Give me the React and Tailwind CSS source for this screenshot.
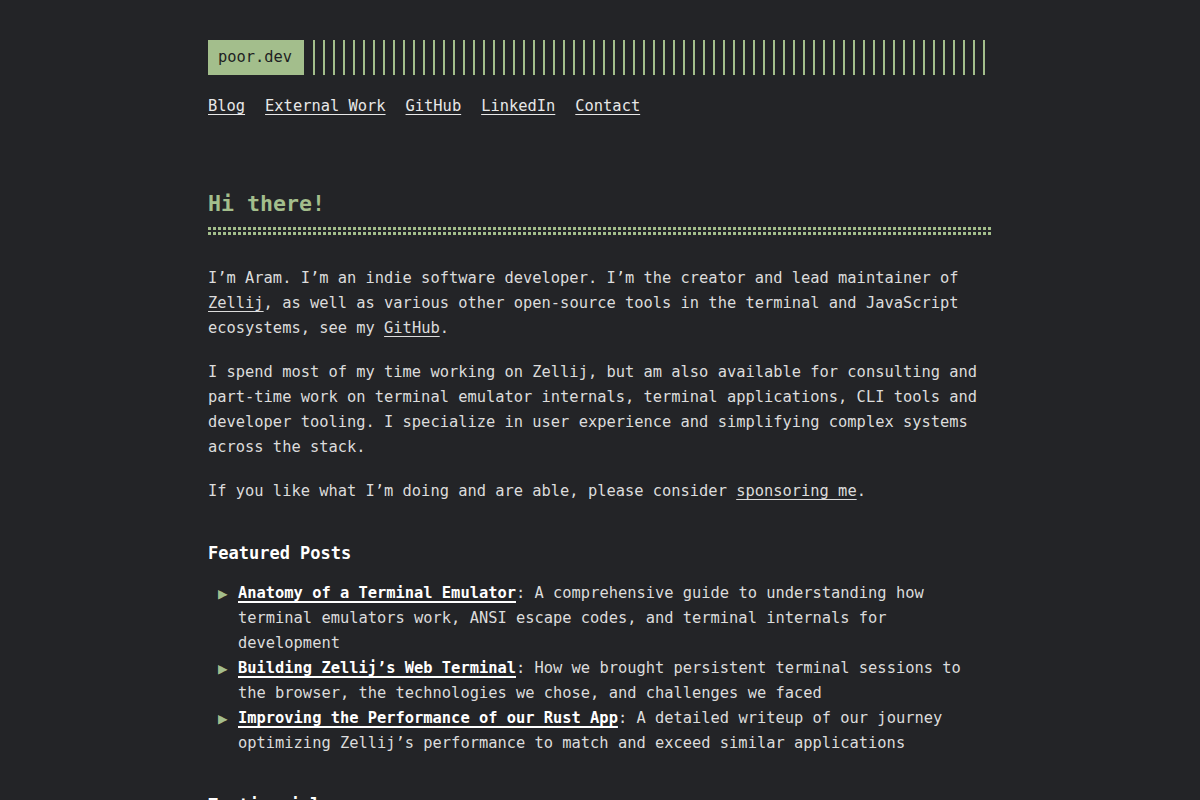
export default function App() {
  const links = ["Blog", "External Work", "GitHub", "LinkedIn", "Contact"];
  const posts = [
    {
      title: "Anatomy of a Terminal Emulator",
      text: "A comprehensive guide to understanding how terminal emulators work, ANSI escape codes, and terminal internals for development",
    },
    {
      title: "Building Zellij’s Web Terminal",
      text: "How we brought persistent terminal sessions to the browser, the technologies we chose, and challenges we faced",
    },
    {
      title: "Improving the Performance of our Rust App",
      text: "A detailed writeup of our journey optimizing Zellij’s performance to match and exceed similar applications",
    },
  ];

  return (
    <div className="min-h-screen bg-[#232427] text-[#dcdcdc] font-['DejaVu_Sans_Mono','Liberation_Mono',monospace] text-[15.4px] leading-[25px]">
      <div className="mx-auto w-[784px] pt-[40px] pb-10">
        <header className="flex items-stretch h-[35px]">
          <div className="bg-[#a3be8c] text-[#1e1f22] px-[10px] flex items-center w-[96px]">poor.dev</div>
          <div className="ml-[9px] w-[675px] bg-[repeating-linear-gradient(90deg,#a3be8c_0_2px,transparent_2px_10px)]" />
        </header>

        <nav className="flex gap-[20px] mt-[19px]">
          {links.map((l) => (
            <a key={l} href="#" className="underline underline-offset-[3px] text-[#e8e8e8]">
              {l}
            </a>
          ))}
        </nav>

        <h1 className="mt-[71px] text-[21.6px] leading-[28px] font-bold text-[#a3be8c]">Hi there!</h1>
        <div className="mt-[9px] flex flex-col gap-[2px]">
          <div className="h-[3px] bg-[repeating-linear-gradient(90deg,#a3be8c_0_3px,transparent_3px_5px)]" />
          <div className="h-[3px] bg-[repeating-linear-gradient(90deg,#a3be8c_0_3px,transparent_3px_5px)]" />
        </div>

        <div className="mt-[31px] flex flex-col gap-[19px]">
          <p>
            I’m Aram. I’m an indie software developer. I’m the creator and lead maintainer of{" "}
            <a href="#" className="underline underline-offset-[3px]">Zellij</a>, as well as various other open-source tools in the terminal and JavaScript ecosystems, see my{" "}
            <a href="#" className="underline underline-offset-[3px]">GitHub</a>.
          </p>
          <p>
            I spend most of my time working on Zellij, but am also available for consulting and part-time work on terminal emulator internals, terminal applications, CLI tools and developer tooling. I specialize in user experience and simplifying complex systems across the stack.
          </p>
          <p>
            If you like what I’m doing and are able, please consider{" "}
            <a href="#" className="underline underline-offset-[3px]">sponsoring me</a>.
          </p>
        </div>

        <h2 className="mt-[37px] text-[17px] leading-[25px] font-bold text-white">Featured Posts</h2>

        <ul className="mt-[15px]">
          {posts.map((p) => (
            <li key={p.title} className="flex">
              <span className="w-[30px] shrink-0 pl-[10px] text-[#a3be8c] text-[16px]">▶</span>
              <span>
                <a href="#" className="font-bold text-white underline decoration-2 underline-offset-[3px]">{p.title}</a>: {p.text}
              </span>
            </li>
          ))}
        </ul>

        <h2 className="mt-[37px] text-[17px] leading-[25px] font-bold text-white">Testimonials</h2>
      </div>
    </div>
  );
}
